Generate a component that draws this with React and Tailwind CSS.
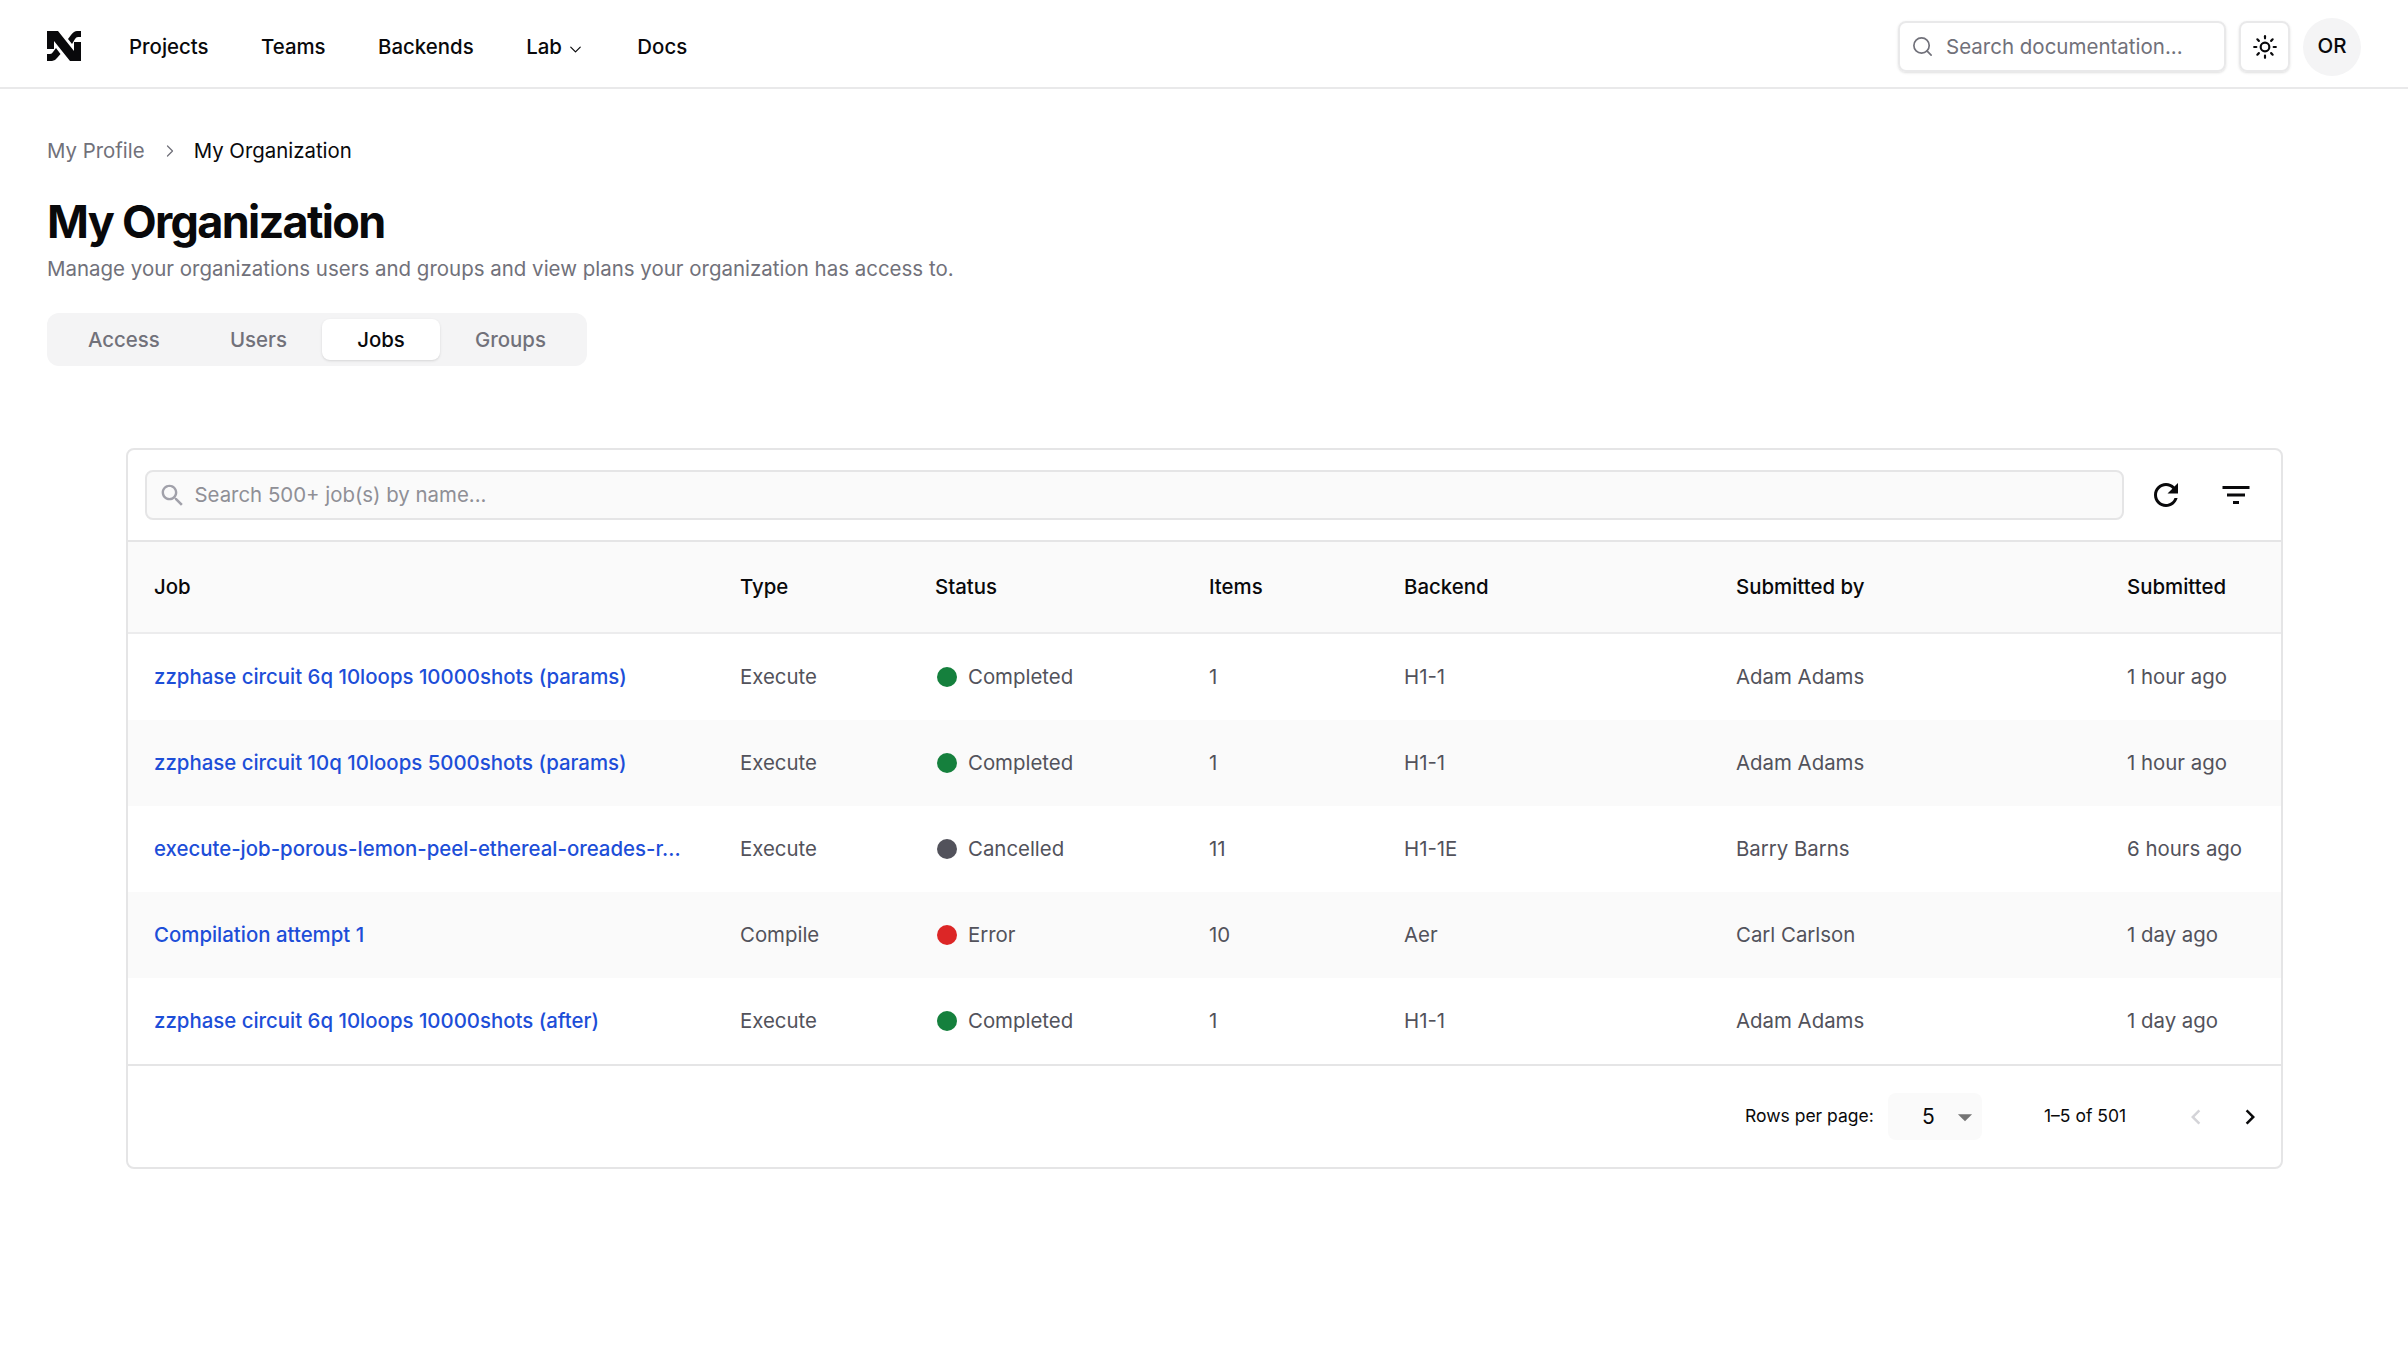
import React from 'react';
import {ChevronDown, ChevronRight, Search, Sun} from 'lucide-react';

const jobs = [
    {name: 'zzphase circuit 6q 10loops 10000shots (params)', type: 'Execute', status: 'Completed', dot: 'bg-[#15803d]', items: '1', backend: 'H1-1', by: 'Adam Adams', when: '1 hour ago'},
    {name: 'zzphase circuit 10q 10loops 5000shots (params)', type: 'Execute', status: 'Completed', dot: 'bg-[#15803d]', items: '1', backend: 'H1-1', by: 'Adam Adams', when: '1 hour ago'},
    {name: 'execute-job-porous-lemon-peel-ethereal-oreades-r...', type: 'Execute', status: 'Cancelled', dot: 'bg-[#52525b]', items: '11', backend: 'H1-1E', by: 'Barry Barns', when: '6 hours ago'},
    {name: 'Compilation attempt 1', type: 'Compile', status: 'Error', dot: 'bg-[#dc2626]', items: '10', backend: 'Aer', by: 'Carl Carlson', when: '1 day ago'},
    {name: 'zzphase circuit 6q 10loops 10000shots (after)', type: 'Execute', status: 'Completed', dot: 'bg-[#15803d]', items: '1', backend: 'H1-1', by: 'Adam Adams', when: '1 day ago'},
];

const cols = 'grid grid-cols-[586px_195px_274px_195px_332px_391px_1fr] items-center pl-[26px]';

const Logo = () => (
    <svg width="34" height="30" viewBox="0 0 34 30" fill="#09090b">
        <path d="M0 0H11L27 20V11H34V30H23L7 10V18H0Z" />
        <path d="M21 8L24 4Q27 0 30 0H34V6H31Q29 6 28 8L25 13Z" />
        <path d="M0 23H3Q5 23 6 21L9 17L13.5 23L10 27Q8 30 5 30H0Z" />
    </svg>
);

const Mui = ({d, size = 36, className = ''}) => (
    <svg width={size} height={size} viewBox="0 0 24 24" fill="currentColor" className={className}>
        <path d={d} />
    </svg>
);

const Nav = () => (
    <nav className="flex h-[89px] items-center justify-between border-b-2 border-[#e9e9ea] pl-[47px] pr-[47px] pt-[6px]">
        <div className="flex items-center">
            <Logo />
            <ul className="ml-[48px] flex items-center gap-[52.5px] pt-[1px] text-[20.4px] font-medium text-[#09090b]">
                <li>Projects</li>
                <li>Teams</li>
                <li>Backends</li>
                <li className="flex items-center gap-[4px]">
                    Lab
                    <ChevronDown size={19} strokeWidth={1.5} className="mt-[5px]" />
                </li>
                <li>Docs</li>
            </ul>
        </div>
        <div className="flex items-center">
            <div className="flex h-[51px] w-[328px] items-center rounded-lg border-2 border-[#e9e9ea] pl-[11px] shadow-sm">
                <Search size={23} strokeWidth={1.75} className="text-[#71717a]" />
                <span className="ml-[12px] pt-[1px] text-[20.5px] text-[#71717a]">Search documentation...</span>
            </div>
            <button className="ml-[13px] flex h-[51px] w-[51px] items-center justify-center rounded-lg border-2 border-[#e9e9ea] shadow-sm">
                <Sun size={26} strokeWidth={2} className="text-[#09090b]" />
            </button>
            <div className="ml-[13px] flex h-[58px] w-[58px] items-center justify-center rounded-full bg-[#f4f4f5] text-[20.5px] font-medium text-[#09090b]">
                OR
            </div>
        </div>
    </nav>
);

const Tabs = () => (
    <div className="mt-[29px] flex h-[53px] w-[540px] items-center rounded-xl bg-[#f4f4f5] p-[6px] text-[20.4px] font-medium text-[#71717a]">
        <div className="w-[142px] pl-[35px] pt-[1px]">Access</div>
        <div className="w-[127px] pl-[35px] pt-[1px]">Users</div>
        <div className="flex h-[41px] w-[118px] items-center justify-center rounded-lg bg-white pt-[1px] text-[#09090b] shadow-sm">Jobs</div>
        <div className="pl-[35px] pt-[1px]">Groups</div>
    </div>
);

const Table = () => (
    <div className="text-[20.4px]">
        <div className={`${cols} h-[92px] border-b-2 border-[#ececed] bg-[#fafafa] font-medium text-[#09090b]`}>
            <div>Job</div>
            <div>Type</div>
            <div>Status</div>
            <div>Items</div>
            <div>Backend</div>
            <div>Submitted by</div>
            <div>Submitted</div>
        </div>
        {jobs.map((job, i) => (
            <div key={i} className={`${cols} h-[86px] text-[#52525b] ${i % 2 === 1 ? 'bg-[#fafafa]' : 'bg-white'}`}>
                <div className="font-medium text-[#1d4ed8]">{job.name}</div>
                <div>{job.type}</div>
                <div className="flex items-center gap-[11px]">
                    <span className={`ml-[2px] h-[20px] w-[20px] rounded-full ${job.dot}`} />
                    {job.status}
                </div>
                <div>{job.items}</div>
                <div>{job.backend}</div>
                <div>{job.by}</div>
                <div>{job.when}</div>
            </div>
        ))}
    </div>
);

const App = () => (
    <div className="min-h-[1349px] bg-white font-['Inter',sans-serif]">
        <Nav />
        <main className="pl-[47px] pt-[47px]">
            <div className="flex h-[30px] items-center text-[20.4px] text-[#71717a]">
                My Profile
                <ChevronRight size={20} strokeWidth={1.5} className="ml-[15px]" />
                <span className="ml-[14px] text-[#09090b]">My Organization</span>
            </div>
            <h1 className="mt-[29px] text-[45px] leading-[54px] font-bold tracking-[-1.7px] text-[#09090b]">My Organization</h1>
            <p className="mt-[5px] text-[20.48px] leading-[30px] text-[#71717a]">
                Manage your organizations users and groups and view plans your organization has access to.
            </p>
            <Tabs />
            <section className="ml-[79px] mt-[82px] w-[2157px] rounded-lg border-2 border-[#e5e5e6]">
                <div className="flex h-[92px] items-center border-b-2 border-[#e5e5e6] pl-[16.5px] pr-[27px]">
                    <div className="flex h-[50px] flex-1 items-center rounded-lg border-2 border-[#e5e5e6] bg-[#fafafa] pl-[11px]">
                        <Mui size={29} className="text-[#a1a1aa]" d="M15.5 14h-.79l-.28-.27C15.41 12.59 16 11.11 16 9.5 16 5.91 13.09 3 9.5 3S3 5.91 3 9.5 5.91 16 9.5 16c1.61 0 3.09-.59 4.23-1.57l.27.28v.79l5 4.99L20.49 19l-4.99-5zm-6 0C7.01 14 5 11.99 5 9.5S7.01 5 9.5 5 14 7.01 14 9.5 11.99 14 9.5 14z" />
                        <span className="ml-[8px] text-[20.4px] text-[#8f8f96]">Search 500+ job(s) by name...</span>
                    </div>
                    <div className="ml-[24px] flex items-center gap-[34px] text-[#09090b]">
                        <Mui d="M17.65 6.35C16.2 4.9 14.21 4 12 4c-4.42 0-7.99 3.58-7.99 8s3.57 8 7.99 8c3.73 0 6.84-2.55 7.73-6h-2.08c-.82 2.33-3.04 4-5.65 4-3.31 0-6-2.69-6-6s2.69-6 6-6c1.66 0 3.14.69 4.22 1.78L13 11h7V4l-2.35 2.35z" />
                        <Mui d="M10 18h4v-2h-4v2zM3 6v2h18V6H3zm3 7h12v-2H6v2z" />
                    </div>
                </div>
                <Table />
                <div className="flex h-[103px] items-center border-t-2 border-[#e5e5e6] pl-[1617px] text-[17.5px] text-[#09090b]">
                    <span className="w-[143px]">Rows per page:</span>
                    <div className="flex h-[47px] w-[94px] items-center rounded-lg bg-[#fafafa] pl-[34px] text-[21px]">
                        5
                        <Mui size={34} className="ml-[13px] text-[#757575]" d="M7 10l5 5 5-5z" />
                    </div>
                    <span className="ml-[62px] w-[85px]">1–5 of 501</span>
                    <Mui size={30} className="ml-[52px] text-[#d4d4d8]" d="M15.41 7.41 14 6l-6 6 6 6 1.41-1.41L10.83 12z" />
                    <Mui size={30} className="ml-[24px]" d="M10 6 8.59 7.41 13.17 12l-4.58 4.59L10 18l6-6z" />
                </div>
            </section>
        </main>
    </div>
);

export default App;
